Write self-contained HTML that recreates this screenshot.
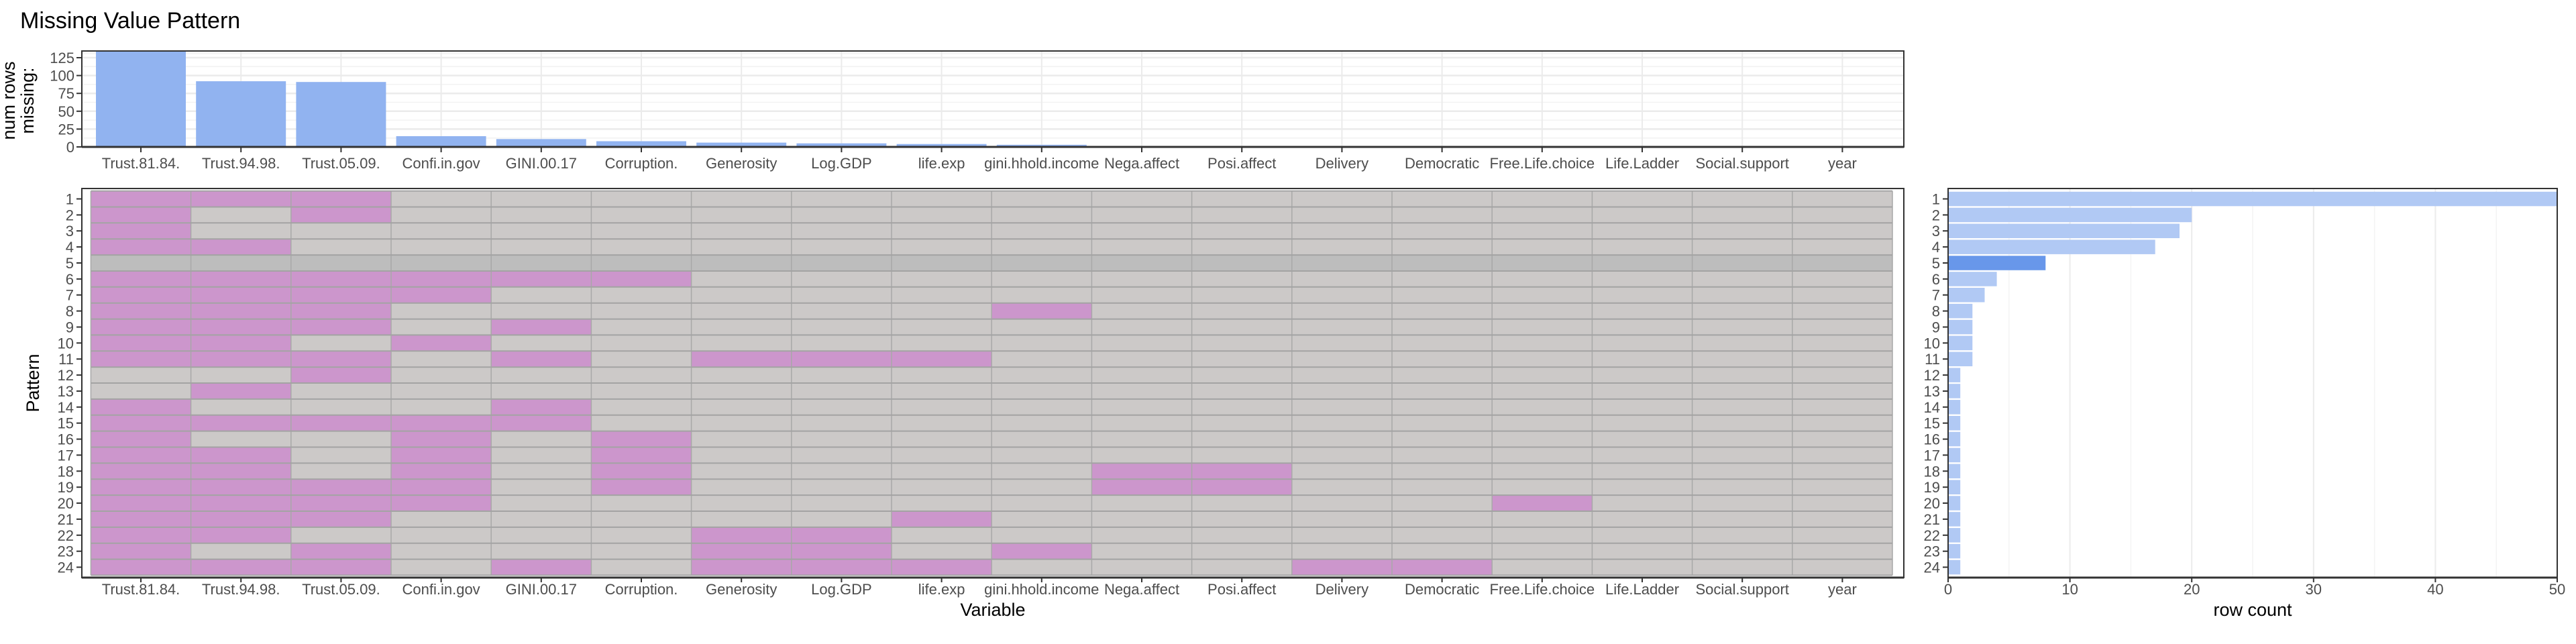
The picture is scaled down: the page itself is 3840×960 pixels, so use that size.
<!DOCTYPE html>
<html><head><meta charset="utf-8"><style>
html,body{margin:0;padding:0;background:#fff;}
svg{display:block;}
text{font-family:"Liberation Sans",sans-serif;}
</style></head><body>
<svg width="3840" height="960" viewBox="0 0 3840 960" xmlns="http://www.w3.org/2000/svg">
<rect width="3840" height="960" fill="#fff"/>
<text x="30" y="42" font-size="34" fill="#000">Missing Value Pattern</text>

<!-- TOP PANEL -->
<g stroke="#F2F2F2" stroke-width="1.5">
<line x1="122" x2="2838" y1="205.7" y2="205.7"/><line x1="122" x2="2838" y1="179.1" y2="179.1"/><line x1="122" x2="2838" y1="152.5" y2="152.5"/><line x1="122" x2="2838" y1="125.9" y2="125.9"/><line x1="122" x2="2838" y1="99.3" y2="99.3"/><line x1="122" x2="2838" y1="80" y2="80"/>
</g>
<g stroke="#EBEBEB" stroke-width="2.5">
<line x1="122" x2="2838" y1="192.4" y2="192.4"/><line x1="122" x2="2838" y1="165.8" y2="165.8"/><line x1="122" x2="2838" y1="139.2" y2="139.2"/><line x1="122" x2="2838" y1="112.6" y2="112.6"/><line x1="122" x2="2838" y1="86" y2="86"/>
</g>
<g stroke="#EBEBEB" stroke-width="2">
<line x1="210" x2="210" y1="76" y2="219"/><line x1="359.2" x2="359.2" y1="76" y2="219"/><line x1="508.4" x2="508.4" y1="76" y2="219"/><line x1="657.6" x2="657.6" y1="76" y2="219"/><line x1="806.8" x2="806.8" y1="76" y2="219"/><line x1="956" x2="956" y1="76" y2="219"/><line x1="1105.2" x2="1105.2" y1="76" y2="219"/><line x1="1254.4" x2="1254.4" y1="76" y2="219"/><line x1="1403.6" x2="1403.6" y1="76" y2="219"/><line x1="1552.8" x2="1552.8" y1="76" y2="219"/><line x1="1702" x2="1702" y1="76" y2="219"/><line x1="1851.2" x2="1851.2" y1="76" y2="219"/><line x1="2000.4" x2="2000.4" y1="76" y2="219"/><line x1="2149.6" x2="2149.6" y1="76" y2="219"/><line x1="2298.8" x2="2298.8" y1="76" y2="219"/><line x1="2448" x2="2448" y1="76" y2="219"/><line x1="2597.2" x2="2597.2" y1="76" y2="219"/><line x1="2746.4" x2="2746.4" y1="76" y2="219"/>
</g>
<g fill="#91B3F0">
<rect x="143" y="76" width="134" height="143"/>
<rect x="292.2" y="121.1" width="134" height="97.9"/>
<rect x="441.4" y="122.2" width="134" height="96.8"/>
<rect x="590.6" y="203" width="134" height="16"/>
<rect x="739.8" y="207.3" width="134" height="11.7"/>
<rect x="889" y="210.5" width="134" height="8.5"/>
<rect x="1038.2" y="212.6" width="134" height="6.4"/>
<rect x="1187.4" y="213.7" width="134" height="5.3"/>
<rect x="1336.6" y="214.7" width="134" height="4.3"/>
<rect x="1485.8" y="215.8" width="134" height="3.2"/>
</g>
<rect x="122" y="76" width="2716" height="143" fill="none" stroke="#333" stroke-width="2"/>
<line x1="122" x2="2838" y1="219" y2="219" stroke="#333" stroke-width="3"/>
<g stroke="#333" stroke-width="2">
<line x1="114" x2="122" y1="219" y2="219"/><line x1="114" x2="122" y1="192.4" y2="192.4"/><line x1="114" x2="122" y1="165.8" y2="165.8"/><line x1="114" x2="122" y1="139.2" y2="139.2"/><line x1="114" x2="122" y1="112.6" y2="112.6"/><line x1="114" x2="122" y1="86" y2="86"/>
<line x1="210" x2="210" y1="219" y2="227"/><line x1="359.2" x2="359.2" y1="219" y2="227"/><line x1="508.4" x2="508.4" y1="219" y2="227"/><line x1="657.6" x2="657.6" y1="219" y2="227"/><line x1="806.8" x2="806.8" y1="219" y2="227"/><line x1="956" x2="956" y1="219" y2="227"/><line x1="1105.2" x2="1105.2" y1="219" y2="227"/><line x1="1254.4" x2="1254.4" y1="219" y2="227"/><line x1="1403.6" x2="1403.6" y1="219" y2="227"/><line x1="1552.8" x2="1552.8" y1="219" y2="227"/><line x1="1702" x2="1702" y1="219" y2="227"/><line x1="1851.2" x2="1851.2" y1="219" y2="227"/><line x1="2000.4" x2="2000.4" y1="219" y2="227"/><line x1="2149.6" x2="2149.6" y1="219" y2="227"/><line x1="2298.8" x2="2298.8" y1="219" y2="227"/><line x1="2448" x2="2448" y1="219" y2="227"/><line x1="2597.2" x2="2597.2" y1="219" y2="227"/><line x1="2746.4" x2="2746.4" y1="219" y2="227"/>
</g>
<g font-size="22" fill="#4D4D4D" text-anchor="end">
<text x="111" y="227">0</text><text x="111" y="200.4">25</text><text x="111" y="173.8">50</text><text x="111" y="147.2">75</text><text x="111" y="120.6">100</text><text x="111" y="94">125</text>
</g>
<g font-size="22" fill="#4D4D4D" text-anchor="middle">
<text x="210" y="251">Trust.81.84.</text><text x="359.2" y="251">Trust.94.98.</text><text x="508.4" y="251">Trust.05.09.</text><text x="657.6" y="251">Confi.in.gov</text><text x="806.8" y="251">GINI.00.17</text><text x="956" y="251">Corruption.</text><text x="1105.2" y="251">Generosity</text><text x="1254.4" y="251">Log.GDP</text><text x="1403.6" y="251">life.exp</text><text x="1552.8" y="251">gini.hhold.income</text><text x="1702" y="251">Nega.affect</text><text x="1851.2" y="251">Posi.affect</text><text x="2000.4" y="251">Delivery</text><text x="2149.6" y="251">Democratic</text><text x="2298.8" y="251">Free.Life.choice</text><text x="2448" y="251">Life.Ladder</text><text x="2597.2" y="251">Social.support</text><text x="2746.4" y="251">year</text>
</g>
<g font-size="27" fill="#000" text-anchor="middle">
<text transform="translate(22,150) rotate(-90)">num rows</text>
<text transform="translate(50,150) rotate(-90)">missing:</text>
</g>

<!-- BOTTOM LEFT PANEL -->
<rect x="135.4" y="284.6" width="2685.6" height="572.9" fill="#CCC9C8"/>
<rect x="135.4" y="380.1" width="2685.6" height="23.9" fill="#BDBDBD"/>
<g fill="#CC96CC">
<rect x="135.4" y="284.6" width="447.6" height="23.9"/>
<rect x="135.4" y="308.5" width="149.2" height="23.9"/><rect x="433.8" y="308.5" width="149.2" height="23.9"/>
<rect x="135.4" y="332.3" width="149.2" height="23.9"/>
<rect x="135.4" y="356.2" width="298.4" height="23.9"/>
<rect x="135.4" y="404" width="895.2" height="23.9"/>
<rect x="135.4" y="427.8" width="596.8" height="23.9"/>
<rect x="135.4" y="451.7" width="447.6" height="23.9"/><rect x="1478.2" y="451.7" width="149.2" height="23.9"/>
<rect x="135.4" y="475.6" width="447.6" height="23.9"/><rect x="732.2" y="475.6" width="149.2" height="23.9"/>
<rect x="135.4" y="499.4" width="298.4" height="23.9"/><rect x="583" y="499.4" width="149.2" height="23.9"/>
<rect x="135.4" y="523.3" width="447.6" height="23.9"/><rect x="732.2" y="523.3" width="149.2" height="23.9"/><rect x="1030.6" y="523.3" width="447.6" height="23.9"/>
<rect x="433.8" y="547.2" width="149.2" height="23.9"/>
<rect x="284.6" y="571" width="149.2" height="23.9"/>
<rect x="135.4" y="594.9" width="149.2" height="23.9"/><rect x="732.2" y="594.9" width="149.2" height="23.9"/>
<rect x="135.4" y="618.8" width="746" height="23.9"/>
<rect x="135.4" y="642.6" width="149.2" height="23.9"/><rect x="583" y="642.6" width="149.2" height="23.9"/><rect x="881.4" y="642.6" width="149.2" height="23.9"/>
<rect x="135.4" y="666.5" width="298.4" height="23.9"/><rect x="583" y="666.5" width="149.2" height="23.9"/><rect x="881.4" y="666.5" width="149.2" height="23.9"/>
<rect x="135.4" y="690.4" width="298.4" height="23.9"/><rect x="583" y="690.4" width="149.2" height="23.9"/><rect x="881.4" y="690.4" width="149.2" height="23.9"/><rect x="1627.4" y="690.4" width="298.4" height="23.9"/>
<rect x="135.4" y="714.3" width="596.8" height="23.9"/><rect x="881.4" y="714.3" width="149.2" height="23.9"/><rect x="1627.4" y="714.3" width="298.4" height="23.9"/>
<rect x="135.4" y="738.1" width="596.8" height="23.9"/><rect x="2224.2" y="738.1" width="149.2" height="23.9"/>
<rect x="135.4" y="762" width="447.6" height="23.9"/><rect x="1329" y="762" width="149.2" height="23.9"/>
<rect x="135.4" y="785.9" width="298.4" height="23.9"/><rect x="1030.6" y="785.9" width="298.4" height="23.9"/>
<rect x="135.4" y="809.7" width="149.2" height="23.9"/><rect x="433.8" y="809.7" width="149.2" height="23.9"/><rect x="1030.6" y="809.7" width="298.4" height="23.9"/><rect x="1478.2" y="809.7" width="149.2" height="23.9"/>
<rect x="135.4" y="833.6" width="447.6" height="23.9"/><rect x="732.2" y="833.6" width="149.2" height="23.9"/><rect x="1030.6" y="833.6" width="447.6" height="23.9"/><rect x="1925.8" y="833.6" width="298.4" height="23.9"/>
</g>
<g stroke="#A8A8A8" stroke-width="1.5">
<line y1="284.6" y2="857.5" x1="135.4" x2="135.4"/><line y1="284.6" y2="857.5" x1="284.6" x2="284.6"/><line y1="284.6" y2="857.5" x1="433.8" x2="433.8"/><line y1="284.6" y2="857.5" x1="583" x2="583"/><line y1="284.6" y2="857.5" x1="732.2" x2="732.2"/><line y1="284.6" y2="857.5" x1="881.4" x2="881.4"/><line y1="284.6" y2="857.5" x1="1030.6" x2="1030.6"/><line y1="284.6" y2="857.5" x1="1179.8" x2="1179.8"/><line y1="284.6" y2="857.5" x1="1329" x2="1329"/><line y1="284.6" y2="857.5" x1="1478.2" x2="1478.2"/><line y1="284.6" y2="857.5" x1="1627.4" x2="1627.4"/><line y1="284.6" y2="857.5" x1="1776.6" x2="1776.6"/><line y1="284.6" y2="857.5" x1="1925.8" x2="1925.8"/><line y1="284.6" y2="857.5" x1="2075" x2="2075"/><line y1="284.6" y2="857.5" x1="2224.2" x2="2224.2"/><line y1="284.6" y2="857.5" x1="2373.4" x2="2373.4"/><line y1="284.6" y2="857.5" x1="2522.6" x2="2522.6"/><line y1="284.6" y2="857.5" x1="2671.8" x2="2671.8"/><line y1="284.6" y2="857.5" x1="2821" x2="2821"/>
</g>
<g stroke="#A3A3A3" stroke-width="2">
<line x1="135.4" x2="2821" y1="284.6" y2="284.6"/><line x1="135.4" x2="2821" y1="308.5" y2="308.5"/><line x1="135.4" x2="2821" y1="332.3" y2="332.3"/><line x1="135.4" x2="2821" y1="356.2" y2="356.2"/><line x1="135.4" x2="2821" y1="380.1" y2="380.1"/><line x1="135.4" x2="2821" y1="404" y2="404"/><line x1="135.4" x2="2821" y1="427.8" y2="427.8"/><line x1="135.4" x2="2821" y1="451.7" y2="451.7"/><line x1="135.4" x2="2821" y1="475.6" y2="475.6"/><line x1="135.4" x2="2821" y1="499.4" y2="499.4"/><line x1="135.4" x2="2821" y1="523.3" y2="523.3"/><line x1="135.4" x2="2821" y1="547.2" y2="547.2"/><line x1="135.4" x2="2821" y1="571" y2="571"/><line x1="135.4" x2="2821" y1="594.9" y2="594.9"/><line x1="135.4" x2="2821" y1="618.8" y2="618.8"/><line x1="135.4" x2="2821" y1="642.6" y2="642.6"/><line x1="135.4" x2="2821" y1="666.5" y2="666.5"/><line x1="135.4" x2="2821" y1="690.4" y2="690.4"/><line x1="135.4" x2="2821" y1="714.3" y2="714.3"/><line x1="135.4" x2="2821" y1="738.1" y2="738.1"/><line x1="135.4" x2="2821" y1="762" y2="762"/><line x1="135.4" x2="2821" y1="785.9" y2="785.9"/><line x1="135.4" x2="2821" y1="809.7" y2="809.7"/><line x1="135.4" x2="2821" y1="833.6" y2="833.6"/><line x1="135.4" x2="2821" y1="857.5" y2="857.5"/>
</g>
<rect x="122" y="281" width="2716" height="580" fill="none" stroke="#333" stroke-width="2"/>
<line x1="122" x2="2838" y1="861" y2="861" stroke="#333" stroke-width="3"/>
<g stroke="#333" stroke-width="2">
<line x1="114" x2="122" y1="296.5" y2="296.5"/><line x1="114" x2="122" y1="320.4" y2="320.4"/><line x1="114" x2="122" y1="344.2" y2="344.2"/><line x1="114" x2="122" y1="368.1" y2="368.1"/><line x1="114" x2="122" y1="392" y2="392"/><line x1="114" x2="122" y1="415.9" y2="415.9"/><line x1="114" x2="122" y1="439.7" y2="439.7"/><line x1="114" x2="122" y1="463.6" y2="463.6"/><line x1="114" x2="122" y1="487.5" y2="487.5"/><line x1="114" x2="122" y1="511.3" y2="511.3"/><line x1="114" x2="122" y1="535.2" y2="535.2"/><line x1="114" x2="122" y1="559.1" y2="559.1"/><line x1="114" x2="122" y1="583" y2="583"/><line x1="114" x2="122" y1="606.8" y2="606.8"/><line x1="114" x2="122" y1="630.7" y2="630.7"/><line x1="114" x2="122" y1="654.6" y2="654.6"/><line x1="114" x2="122" y1="678.4" y2="678.4"/><line x1="114" x2="122" y1="702.3" y2="702.3"/><line x1="114" x2="122" y1="726.2" y2="726.2"/><line x1="114" x2="122" y1="750" y2="750"/><line x1="114" x2="122" y1="773.9" y2="773.9"/><line x1="114" x2="122" y1="797.8" y2="797.8"/><line x1="114" x2="122" y1="821.7" y2="821.7"/><line x1="114" x2="122" y1="845.5" y2="845.5"/>
<line x1="210" x2="210" y1="861" y2="868"/><line x1="359.2" x2="359.2" y1="861" y2="868"/><line x1="508.4" x2="508.4" y1="861" y2="868"/><line x1="657.6" x2="657.6" y1="861" y2="868"/><line x1="806.8" x2="806.8" y1="861" y2="868"/><line x1="956" x2="956" y1="861" y2="868"/><line x1="1105.2" x2="1105.2" y1="861" y2="868"/><line x1="1254.4" x2="1254.4" y1="861" y2="868"/><line x1="1403.6" x2="1403.6" y1="861" y2="868"/><line x1="1552.8" x2="1552.8" y1="861" y2="868"/><line x1="1702" x2="1702" y1="861" y2="868"/><line x1="1851.2" x2="1851.2" y1="861" y2="868"/><line x1="2000.4" x2="2000.4" y1="861" y2="868"/><line x1="2149.6" x2="2149.6" y1="861" y2="868"/><line x1="2298.8" x2="2298.8" y1="861" y2="868"/><line x1="2448" x2="2448" y1="861" y2="868"/><line x1="2597.2" x2="2597.2" y1="861" y2="868"/><line x1="2746.4" x2="2746.4" y1="861" y2="868"/>
</g>
<g font-size="22" fill="#4D4D4D" text-anchor="end">
<text x="110" y="304.5">1</text><text x="110" y="328.4">2</text><text x="110" y="352.2">3</text><text x="110" y="376.1">4</text><text x="110" y="400">5</text><text x="110" y="423.9">6</text><text x="110" y="447.7">7</text><text x="110" y="471.6">8</text><text x="110" y="495.5">9</text><text x="110" y="519.3">10</text><text x="110" y="543.2">11</text><text x="110" y="567.1">12</text><text x="110" y="591">13</text><text x="110" y="614.8">14</text><text x="110" y="638.7">15</text><text x="110" y="662.6">16</text><text x="110" y="686.4">17</text><text x="110" y="710.3">18</text><text x="110" y="734.2">19</text><text x="110" y="758">20</text><text x="110" y="781.9">21</text><text x="110" y="805.8">22</text><text x="110" y="829.7">23</text><text x="110" y="853.5">24</text>
</g>
<g font-size="22" fill="#4D4D4D" text-anchor="middle">
<text x="210" y="886">Trust.81.84.</text><text x="359.2" y="886">Trust.94.98.</text><text x="508.4" y="886">Trust.05.09.</text><text x="657.6" y="886">Confi.in.gov</text><text x="806.8" y="886">GINI.00.17</text><text x="956" y="886">Corruption.</text><text x="1105.2" y="886">Generosity</text><text x="1254.4" y="886">Log.GDP</text><text x="1403.6" y="886">life.exp</text><text x="1552.8" y="886">gini.hhold.income</text><text x="1702" y="886">Nega.affect</text><text x="1851.2" y="886">Posi.affect</text><text x="2000.4" y="886">Delivery</text><text x="2149.6" y="886">Democratic</text><text x="2298.8" y="886">Free.Life.choice</text><text x="2448" y="886">Life.Ladder</text><text x="2597.2" y="886">Social.support</text><text x="2746.4" y="886">year</text>
</g>
<text x="1480" y="918" font-size="27" fill="#000" text-anchor="middle">Variable</text>
<text transform="translate(58,571) rotate(-90)" font-size="27" fill="#000" text-anchor="middle">Pattern</text>

<!-- RIGHT PANEL -->
<g stroke="#F4F4F4" stroke-width="1.5">
<line x1="2994.8" x2="2994.8" y1="281" y2="861"/><line x1="3176.4" x2="3176.4" y1="281" y2="861"/><line x1="3358" x2="3358" y1="281" y2="861"/><line x1="3539.6" x2="3539.6" y1="281" y2="861"/><line x1="3721.2" x2="3721.2" y1="281" y2="861"/>
</g>
<g stroke="#EBEBEB" stroke-width="2">
<line x1="3085.6" x2="3085.6" y1="281" y2="861"/><line x1="3267.2" x2="3267.2" y1="281" y2="861"/><line x1="3448.8" x2="3448.8" y1="281" y2="861"/><line x1="3630.4" x2="3630.4" y1="281" y2="861"/>
</g>
<g fill="#B1C9F4">
<rect x="2904" y="285.8" width="908" height="21.5"/>
<rect x="2904" y="309.7" width="363.2" height="21.5"/>
<rect x="2904" y="333.5" width="345" height="21.5"/>
<rect x="2904" y="357.4" width="308.7" height="21.5"/>
<rect x="2904" y="405.2" width="72.6" height="21.5"/>
<rect x="2904" y="429" width="54.5" height="21.5"/>
<rect x="2904" y="452.9" width="36.3" height="21.5"/>
<rect x="2904" y="476.8" width="36.3" height="21.5"/>
<rect x="2904" y="500.6" width="36.3" height="21.5"/>
<rect x="2904" y="524.5" width="36.3" height="21.5"/>
<rect x="2904" y="548.4" width="18.2" height="21.5"/><rect x="2904" y="572.2" width="18.2" height="21.5"/><rect x="2904" y="596.1" width="18.2" height="21.5"/><rect x="2904" y="620" width="18.2" height="21.5"/><rect x="2904" y="643.8" width="18.2" height="21.5"/><rect x="2904" y="667.7" width="18.2" height="21.5"/><rect x="2904" y="691.6" width="18.2" height="21.5"/><rect x="2904" y="715.5" width="18.2" height="21.5"/><rect x="2904" y="739.3" width="18.2" height="21.5"/><rect x="2904" y="763.2" width="18.2" height="21.5"/><rect x="2904" y="787.1" width="18.2" height="21.5"/><rect x="2904" y="810.9" width="18.2" height="21.5"/><rect x="2904" y="834.8" width="18.2" height="21.5"/>
</g>
<rect x="2904" y="381.3" width="145.3" height="21.5" fill="#6897EA"/>
<rect x="2904" y="281" width="908" height="580" fill="none" stroke="#333" stroke-width="2"/>
<line x1="2904" x2="3812" y1="861" y2="861" stroke="#333" stroke-width="3"/>
<g stroke="#333" stroke-width="2">
<line x1="2896" x2="2904" y1="296.5" y2="296.5"/><line x1="2896" x2="2904" y1="320.4" y2="320.4"/><line x1="2896" x2="2904" y1="344.2" y2="344.2"/><line x1="2896" x2="2904" y1="368.1" y2="368.1"/><line x1="2896" x2="2904" y1="392" y2="392"/><line x1="2896" x2="2904" y1="415.9" y2="415.9"/><line x1="2896" x2="2904" y1="439.7" y2="439.7"/><line x1="2896" x2="2904" y1="463.6" y2="463.6"/><line x1="2896" x2="2904" y1="487.5" y2="487.5"/><line x1="2896" x2="2904" y1="511.3" y2="511.3"/><line x1="2896" x2="2904" y1="535.2" y2="535.2"/><line x1="2896" x2="2904" y1="559.1" y2="559.1"/><line x1="2896" x2="2904" y1="583" y2="583"/><line x1="2896" x2="2904" y1="606.8" y2="606.8"/><line x1="2896" x2="2904" y1="630.7" y2="630.7"/><line x1="2896" x2="2904" y1="654.6" y2="654.6"/><line x1="2896" x2="2904" y1="678.4" y2="678.4"/><line x1="2896" x2="2904" y1="702.3" y2="702.3"/><line x1="2896" x2="2904" y1="726.2" y2="726.2"/><line x1="2896" x2="2904" y1="750" y2="750"/><line x1="2896" x2="2904" y1="773.9" y2="773.9"/><line x1="2896" x2="2904" y1="797.8" y2="797.8"/><line x1="2896" x2="2904" y1="821.7" y2="821.7"/><line x1="2896" x2="2904" y1="845.5" y2="845.5"/>
<line x1="2904" x2="2904" y1="861" y2="868"/><line x1="3085.6" x2="3085.6" y1="861" y2="868"/><line x1="3267.2" x2="3267.2" y1="861" y2="868"/><line x1="3448.8" x2="3448.8" y1="861" y2="868"/><line x1="3630.4" x2="3630.4" y1="861" y2="868"/><line x1="3812" x2="3812" y1="861" y2="868"/>
</g>
<g font-size="22" fill="#4D4D4D" text-anchor="end">
<text x="2892" y="304.5">1</text><text x="2892" y="328.4">2</text><text x="2892" y="352.2">3</text><text x="2892" y="376.1">4</text><text x="2892" y="400">5</text><text x="2892" y="423.9">6</text><text x="2892" y="447.7">7</text><text x="2892" y="471.6">8</text><text x="2892" y="495.5">9</text><text x="2892" y="519.3">10</text><text x="2892" y="543.2">11</text><text x="2892" y="567.1">12</text><text x="2892" y="591">13</text><text x="2892" y="614.8">14</text><text x="2892" y="638.7">15</text><text x="2892" y="662.6">16</text><text x="2892" y="686.4">17</text><text x="2892" y="710.3">18</text><text x="2892" y="734.2">19</text><text x="2892" y="758">20</text><text x="2892" y="781.9">21</text><text x="2892" y="805.8">22</text><text x="2892" y="829.7">23</text><text x="2892" y="853.5">24</text>
</g>
<g font-size="22" fill="#4D4D4D" text-anchor="middle">
<text x="2904" y="886">0</text><text x="3085.6" y="886">10</text><text x="3267.2" y="886">20</text><text x="3448.8" y="886">30</text><text x="3630.4" y="886">40</text><text x="3812" y="886">50</text>
</g>
<text x="3358" y="918" font-size="27" fill="#000" text-anchor="middle">row count</text>
</svg>
</body></html>
